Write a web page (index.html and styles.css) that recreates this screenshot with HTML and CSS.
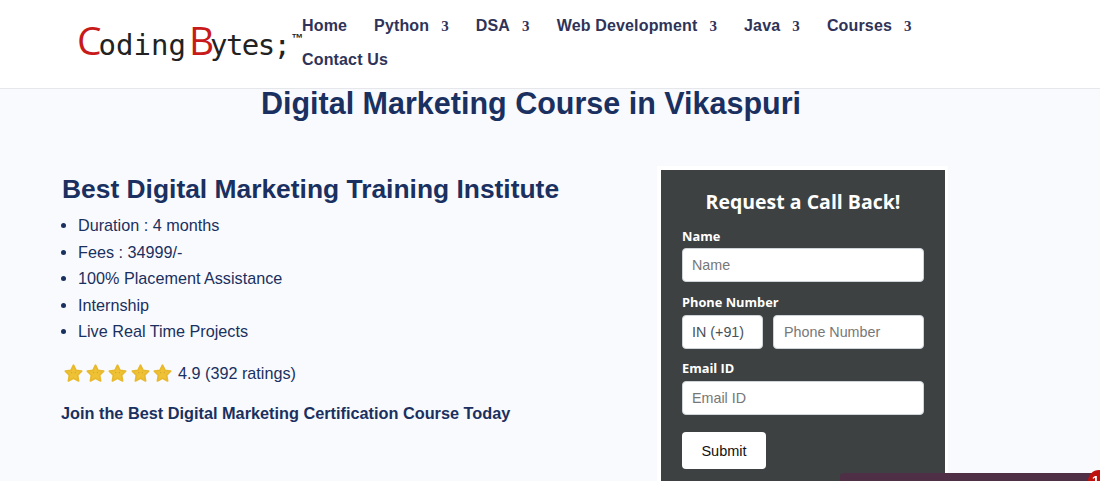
FILE: index.html
```html
<!DOCTYPE html>
<html lang="en">
<head>
    <meta charset="UTF-8">
    <meta name="viewport" content="width=device-width, initial-scale=1.0">
    <title>Digital Marketing Course in Vikaspuri</title>
    <link rel="stylesheet" href="styles.css">
</head>
<body>

<header class="site-header">
    <a class="logo" href="#"><span class="logo-red">C</span><span class="logo-first">oding</span><span class="logo-red logo-b">B</span><span class="logo-second">ytes;</span><sup class="logo-tm">™</sup></a>
    <nav class="main-nav">
        <a href="#">Home</a>
        <a href="#">Python<span class="arrow">3</span></a>
        <a href="#">DSA<span class="arrow">3</span></a>
        <a href="#">Web Development<span class="arrow">3</span></a>
        <a href="#">Java<span class="arrow">3</span></a>
        <a href="#">Courses<span class="arrow">3</span></a>
        <a href="#">Contact Us</a>
    </nav>
</header>

<main class="content">
    <h1 class="page-title">Digital Marketing Course in Vikaspuri</h1>

    <div class="hero">
        <section class="hero-info">
            <h2>Best Digital Marketing Training Institute</h2>
            <ul class="facts">
                <li>Duration : 4 months</li>
                <li>Fees : 34999/-</li>
                <li>100% Placement Assistance</li>
                <li>Internship</li>
                <li>Live Real Time Projects</li>
            </ul>
            <div class="rating">
                <span class="stars">
                    <svg viewBox="0 0 24 24"><path class="star" d="M12 2.5l2.9 6 6.4.9-4.6 4.6 1.1 6.5-5.8-3.1-5.8 3.1 1.1-6.5-4.6-4.6 6.4-.9z"/><circle class="star-dot" cx="10" cy="11" r=".6"/><circle class="star-dot" cx="14" cy="11" r=".6"/></svg>
                    <svg viewBox="0 0 24 24"><path class="star" d="M12 2.5l2.9 6 6.4.9-4.6 4.6 1.1 6.5-5.8-3.1-5.8 3.1 1.1-6.5-4.6-4.6 6.4-.9z"/><circle class="star-dot" cx="10" cy="11" r=".6"/><circle class="star-dot" cx="14" cy="11" r=".6"/></svg>
                    <svg viewBox="0 0 24 24"><path class="star" d="M12 2.5l2.9 6 6.4.9-4.6 4.6 1.1 6.5-5.8-3.1-5.8 3.1 1.1-6.5-4.6-4.6 6.4-.9z"/><circle class="star-dot" cx="10" cy="11" r=".6"/><circle class="star-dot" cx="14" cy="11" r=".6"/></svg>
                    <svg viewBox="0 0 24 24"><path class="star" d="M12 2.5l2.9 6 6.4.9-4.6 4.6 1.1 6.5-5.8-3.1-5.8 3.1 1.1-6.5-4.6-4.6 6.4-.9z"/><circle class="star-dot" cx="10" cy="11" r=".6"/><circle class="star-dot" cx="14" cy="11" r=".6"/></svg>
                    <svg viewBox="0 0 24 24"><path class="star" d="M12 2.5l2.9 6 6.4.9-4.6 4.6 1.1 6.5-5.8-3.1-5.8 3.1 1.1-6.5-4.6-4.6 6.4-.9z"/><circle class="star-dot" cx="10" cy="11" r=".6"/><circle class="star-dot" cx="14" cy="11" r=".6"/></svg>
                </span>
                <span>4.9 (392 ratings)</span>
            </div>
            <p class="join">Join the Best Digital Marketing Certification Course Today</p>
        </section>

        <form class="call-form">
            <h3>Request a Call Back!</h3>
            <label for="name">Name</label>
            <input type="text" id="name" placeholder="Name">
            <label for="phone" class="phone-label">Phone Number</label>
            <div class="phone-row">
                <input type="text" class="code-input" value="IN (+91)">
                <input type="text" id="phone" placeholder="Phone Number">
            </div>
            <label for="email" class="email-label">Email ID</label>
            <input type="text" id="email" placeholder="Email ID">
            <button type="button" class="submit-button">Submit</button>
        </form>
    </div>
</main>

<div class="chat-bar"><span class="chat-badge">1</span></div>

</body>
</html>
```

FILE: styles.css
```css
html, body {
    height: 100%;
    overflow: hidden;
}
body {
    font-family: "Liberation Sans", Arial, sans-serif;
    background-color: #f9fafd;
    color: #1a3060;
    margin: 0;
}
.site-header {
    display: flex;
    height: 89px;
    box-sizing: border-box;
    background-color: #fff;
    border-bottom: 1px solid #e6e7ea;
    padding-left: 77px;
}
.logo {
    width: 225px;
    flex-shrink: 0;
    padding-top: 17px;
    font-family: "DejaVu Sans Mono", monospace;
    font-size: 29px;
    line-height: 46px;
    color: #222;
    text-decoration: none;
    white-space: nowrap;
}
.logo-red {
    color: #c81a1a;
    font-family: "Open Sans", sans-serif;
    font-size: 39px;
    margin-right: -3px;
}
.logo-b {
    margin-left: 3px;
    margin-right: -4px;
}
.logo-second {
    letter-spacing: -1.6px;
}
.logo-tm {
    font-family: "Liberation Sans", Arial, sans-serif;
    font-size: 12px;
    font-weight: bold;
    line-height: 0;
    margin-left: 2px;
    vertical-align: 13px;
}
.main-nav {
    display: flex;
    flex-wrap: wrap;
    align-content: flex-start;
    column-gap: 27px;
    padding-top: 9px;
    width: 660px;
}
.main-nav a {
    font-size: 16px;
    font-weight: bold;
    letter-spacing: 0.15px;
    line-height: 34px;
    color: #2f3358;
    text-decoration: none;
    white-space: nowrap;
}
.arrow {
    font-family: "Liberation Serif", serif;
    font-size: 15px;
    margin-left: 12px;
}
.page-title {
    margin: -2px 0 0;
    padding-left: 62px;
    width: 938px;
    text-align: center;
    font-size: 30.5px;
    line-height: 32px;
    color: #1a3060;
}
.hero {
    display: flex;
    padding: 52px 0 0 62px;
}
.hero-info {
    width: 595px;
    flex-shrink: 0;
    padding-top: 3px;
}
.hero-info h2 {
    margin: 0;
    font-size: 26.4px;
    line-height: 30px;
}
.facts {
    margin: 8px 0 0;
    padding-left: 16px;
    font-size: 16.2px;
    line-height: 26.6px;
}
.rating {
    display: flex;
    align-items: center;
    margin: 17px 0 0 0.5px;
    font-size: 16.2px;
    height: 24px;
}
.stars {
    display: flex;
    gap: 1.4px;
    margin-right: 5px;
}
.stars svg {
    width: 21px;
    height: 21px;
}
.star {
    fill: #eec234;
    stroke: #e8b92e;
    stroke-width: 2;
    stroke-linejoin: round;
}
.star-dot {
    fill: #c9982a;
}
.join {
    margin: 17px 0 0 -1px;
    font-size: 16.3px;
    font-weight: bold;
    line-height: 20px;
}
.call-form {
    width: 242px;
    height: 330px;
    flex-shrink: 0;
    background-color: #3e4142;
    border: 4px solid #fff;
    border-right-width: 3px;
    border-bottom: none;
    padding: 0 21px;
    margin-top: -5px;
    font-family: "Open Sans", sans-serif;
}
.call-form h3 {
    margin: 18px 0 0;
    text-align: center;
    font-size: 19.5px;
    line-height: 27px;
    font-weight: 700;
    color: #fff;
}
.call-form label {
    display: block;
    margin: 12px 0 3px;
    font-size: 12.8px;
    line-height: 18px;
    font-weight: 700;
    color: #fff;
}
.call-form .phone-label {
    margin: 11px 0 4px;
}
.call-form .email-label {
    margin: 10px 0 4px;
}
.call-form input {
    display: block;
    width: 100%;
    height: 34px;
    box-sizing: border-box;
    border: 1px solid #ced4da;
    border-radius: 4px;
    padding: 0 10px 0 9px;
    background-color: #fff;
    color: #495057;
    font-family: "Liberation Sans", Arial, sans-serif;
    font-size: 14.3px;
}
.call-form input::placeholder {
    color: #777;
}
.phone-row {
    display: flex;
    gap: 10px;
}
.call-form .code-input {
    width: 81px;
    flex-shrink: 0;
}
.call-form #phone {
    padding-left: 10px;
}
.submit-button {
    display: block;
    width: 84px;
    height: 37px;
    margin-top: 17px;
    background-color: #fff;
    color: #111;
    border: none;
    border-radius: 4px;
    font-family: "Liberation Sans", Arial, sans-serif;
    font-size: 14.5px;
}
.chat-bar {
    position: fixed;
    left: 840px;
    right: 0;
    bottom: -20px;
    height: 28px;
    background-color: #4f2f45;
    border-radius: 4px 4px 0 0;
}
.chat-badge {
    position: absolute;
    right: -10px;
    top: -3px;
    width: 22px;
    height: 22px;
    border-radius: 50%;
    background-color: #c0100e;
    color: #fff;
    font-size: 13px;
    font-weight: bold;
    line-height: 22px;
    text-indent: 4px;
}
```
